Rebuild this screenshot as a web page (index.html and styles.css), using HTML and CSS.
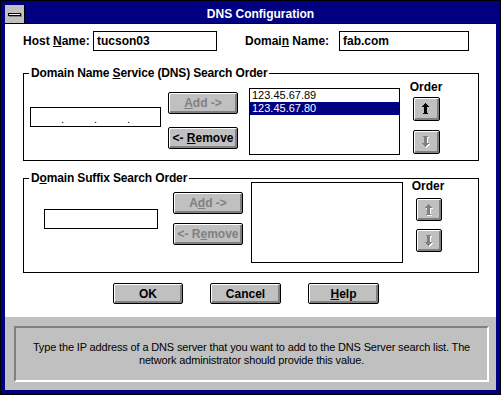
FILE: index.html
```html
<!DOCTYPE html>
<html>
<head>
  <meta charset="UTF-8">
  <title>DNS Configuration</title>
  <link rel="stylesheet" href="styles.css">
</head>
<body>
<div class="window">
  <div class="titlebar">
    <div class="sysmenu"><span class="sysbar"></span></div>
    <div class="title">DNS Configuration</div>
  </div>

  <div class="client">
    <div class="names">
      <label class="lbl host-lbl">Host <u>N</u>ame:</label>
      <div class="edit host-edit">tucson03</div>
      <label class="lbl domain-lbl">Domai<u>n</u> Name:</label>
      <div class="edit domain-edit">fab.com</div>
    </div>

    <fieldset class="group dns">
      <legend>Domain Name <u>S</u>ervice (DNS) Search Order</legend>
      <div class="group-row">
        <div class="ip-edit"><span>.</span><span>.</span><span>.</span></div>
        <div class="btn-col">
          <button class="btn" disabled><u>A</u>dd -&gt;</button>
          <button class="btn">&lt;- <u>R</u>emove</button>
        </div>
        <div class="listbox">
          <div class="item">123.45.67.89</div>
          <div class="item selected">123.45.67.80</div>
        </div>
        <div class="order-col">
          <div class="order-lbl">Order</div>
          <button class="arrow-btn">
            <svg width="8" height="12" viewBox="0 0 8 12"><path d="M3 0h1v1h1v1h1v1h1v1H0V3h1V2h1V1h1z M2 4h3v6H2z M1 10h5v1H1z"/></svg>
          </button>
          <button class="arrow-btn" disabled>
            <svg width="8" height="12" viewBox="0 0 8 12">
              <g class="hl"><path d="M1 0h5v1H1z M2 1h3v6H2z M0 7h7v1H6v1H5v1H4v1H3v-1H2V9H1V8H0z"/></g>
              <path d="M1 0h5v1H1z M2 1h3v6H2z M0 7h7v1H6v1H5v1H4v1H3v-1H2V9H1V8H0z"/>
            </svg>
          </button>
        </div>
      </div>
    </fieldset>

    <fieldset class="group suffix">
      <legend>D<u>o</u>main Suffix Search Order</legend>
      <div class="group-row">
        <div class="edit suffix-edit"></div>
        <div class="btn-col">
          <button class="btn" disabled>A<u>d</u>d -&gt;</button>
          <button class="btn" disabled>&lt;- R<u>e</u>move</button>
        </div>
        <div class="listbox"></div>
        <div class="order-col">
          <div class="order-lbl">Order</div>
          <button class="arrow-btn" disabled>
            <svg width="8" height="12" viewBox="0 0 8 12">
              <g class="hl"><path d="M3 0h1v1h1v1h1v1h1v1H0V3h1V2h1V1h1z M2 4h3v6H2z M1 10h5v1H1z"/></g>
              <path d="M3 0h1v1h1v1h1v1h1v1H0V3h1V2h1V1h1z M2 4h3v6H2z M1 10h5v1H1z"/>
            </svg>
          </button>
          <button class="arrow-btn" disabled>
            <svg width="8" height="12" viewBox="0 0 8 12">
              <g class="hl"><path d="M1 0h5v1H1z M2 1h3v6H2z M0 7h7v1H6v1H5v1H4v1H3v-1H2V9H1V8H0z"/></g>
              <path d="M1 0h5v1H1z M2 1h3v6H2z M0 7h7v1H6v1H5v1H4v1H3v-1H2V9H1V8H0z"/>
            </svg>
          </button>
        </div>
      </div>
    </fieldset>

    <div class="actions">
      <button class="btn">OK</button>
      <button class="btn">Cancel</button>
      <button class="btn"><u>H</u>elp</button>
    </div>
  </div>

  <div class="status">
    <div class="status-box">Type the IP address of a DNS server that you want to add to the DNS Server search list. The network administrator should provide this value.</div>
  </div>
</div>
</body>
</html>
```

FILE: styles.css
```css
body {
  margin: 0;
  font-family: "Liberation Sans", Arial, sans-serif;
  font-size: 12px;
  color: #000;
}

.window {
  width: 501px;
  height: 395px;
  box-sizing: border-box;
  background: #000080;
  border: 1px solid #000;
  padding: 4px;
  display: flex;
  flex-direction: column;
}

.titlebar {
  height: 19px;
  box-sizing: border-box;
  border-bottom: 1px solid #000;
  display: flex;
}

.sysmenu {
  width: 20px;
  box-sizing: border-box;
  background: #c0c0c0;
  border-right: 1px solid #000;
  display: flex;
  align-items: center;
  justify-content: center;
}

.sysbar {
  width: 11px;
  height: 1px;
  border: 1px solid #000;
  background: #fff;
  box-shadow: 1px 1px #808080;
}

.title {
  flex: 1;
  color: #fff;
  font-weight: bold;
  font-size: 12px;
  text-align: center;
  line-height: 18px;
}

.client {
  height: 293px;
  box-sizing: border-box;
  background: #fff;
  padding: 7px 0 0 18px;
}

/* host / domain row */
.names {
  display: flex;
  align-items: center;
  height: 20px;
}

.lbl {
  font-weight: bold;
}

.host-lbl {
  width: 70px;
}

.domain-lbl {
  width: 94px;
  margin-left: 28px;
}

.edit {
  box-sizing: border-box;
  height: 20px;
  border: 1px solid #000;
  background: #fff;
  font-weight: bold;
  line-height: 18px;
  padding-left: 3px;
}

.host-edit {
  width: 124px;
}

.domain-edit {
  width: 130px;
}

/* group boxes */
.group {
  width: 456px;
  box-sizing: border-box;
  margin: 15px 0 0 0;
  padding: 0;
  min-width: 0;
  border: 1px solid #000;
}

.group legend {
  font-weight: bold;
  line-height: 14px;
  letter-spacing: -0.15px;
  padding: 0 2px;
  margin-left: 5px;
}

.group-row {
  display: flex;
  align-items: flex-start;
}

.dns .group-row {
  height: 80px;
}

.suffix {
  margin-top: 10px;
}

.suffix .group-row {
  height: 87px;
}

.ip-edit {
  box-sizing: border-box;
  width: 131px;
  height: 20px;
  margin: 27px 0 0 6px;
  border: 1px solid #000;
  display: flex;
  justify-content: space-evenly;
  align-items: flex-end;
  line-height: 14px;
  font-size: 11px;
}

.suffix-edit {
  width: 114px;
  margin: 24px 0 0 20px;
}

.btn-col {
  display: flex;
  flex-direction: column;
  gap: 13px;
  margin: 12px 0 0 7px;
}

.suffix .btn-col {
  gap: 9px;
  margin: 7px 0 0 15px;
}

.btn {
  box-sizing: border-box;
  width: 70px;
  height: 22px;
  margin: 0;
  padding: 0;
  background: #c0c0c0;
  border: 1px solid #000;
  border-radius: 2px;
  box-shadow: inset 1px 1px #fff, inset -1px -1px #808080, inset -2px -2px #808080;
  font-family: "Liberation Sans", Arial, sans-serif;
  font-size: 12px;
  font-weight: bold;
  color: #000;
}

.btn:disabled {
  color: #808080;
}

.listbox {
  box-sizing: border-box;
  width: 151px;
  height: 67px;
  margin: 8px 0 0 11px;
  border: 1px solid #000;
  background: #fff;
  font-size: 11px;
  line-height: 13px;
}

.suffix .listbox {
  width: 152px;
  height: 81px;
  margin: -3px 0 0 8px;
}

.item {
  padding-left: 2px;
}

.item.selected {
  background: #000080;
  color: #fff;
}

.order-col {
  width: 36px;
  margin: 0 0 0 8px;
  display: flex;
  flex-direction: column;
  align-items: center;
}

.suffix .order-col {
  margin: -6px 0 0 7px;
}

.order-lbl {
  font-weight: bold;
  line-height: 14px;
  margin-bottom: 3px;
}

.arrow-btn {
  box-sizing: border-box;
  width: 27px;
  height: 24px;
  margin: 0 0 9px 0;
  padding: 0;
  background: #c0c0c0;
  border: 1px solid #000;
  border-radius: 2px;
  box-shadow: inset 1px 1px #fff, inset -1px -1px #808080, inset -2px -2px #808080;
  display: flex;
  align-items: center;
  justify-content: center;
}

.suffix .arrow-btn {
  width: 26px;
  height: 23px;
  margin: 2px 0 6px 2px;
}

.arrow-btn svg {
  fill: #000;
}

.arrow-btn:disabled svg {
  fill: #808080;
}

.arrow-btn svg .hl {
  fill: #fff;
  transform: translate(1px, 1px);
}

/* OK / Cancel / Help */
.actions {
  display: flex;
  gap: 27px;
  margin: 10px 0 0 90px;
}

.actions .btn {
  height: 21px;
}

.actions .btn + .btn {
  width: 71px;
}

/* status / help text */
.status {
  flex: 1;
  background: #c0c0c0;
  padding: 9px 7px 8px 9px;
}

.status-box {
  box-sizing: border-box;
  height: 56px;
  border: 2px solid;
  border-color: #808080 #fff #fff #808080;
  display: flex;
  align-items: center;
  justify-content: center;
  text-align: center;
  font-size: 11px;
  line-height: 13px;
  letter-spacing: -0.15px;
  padding: 0;
}
```
